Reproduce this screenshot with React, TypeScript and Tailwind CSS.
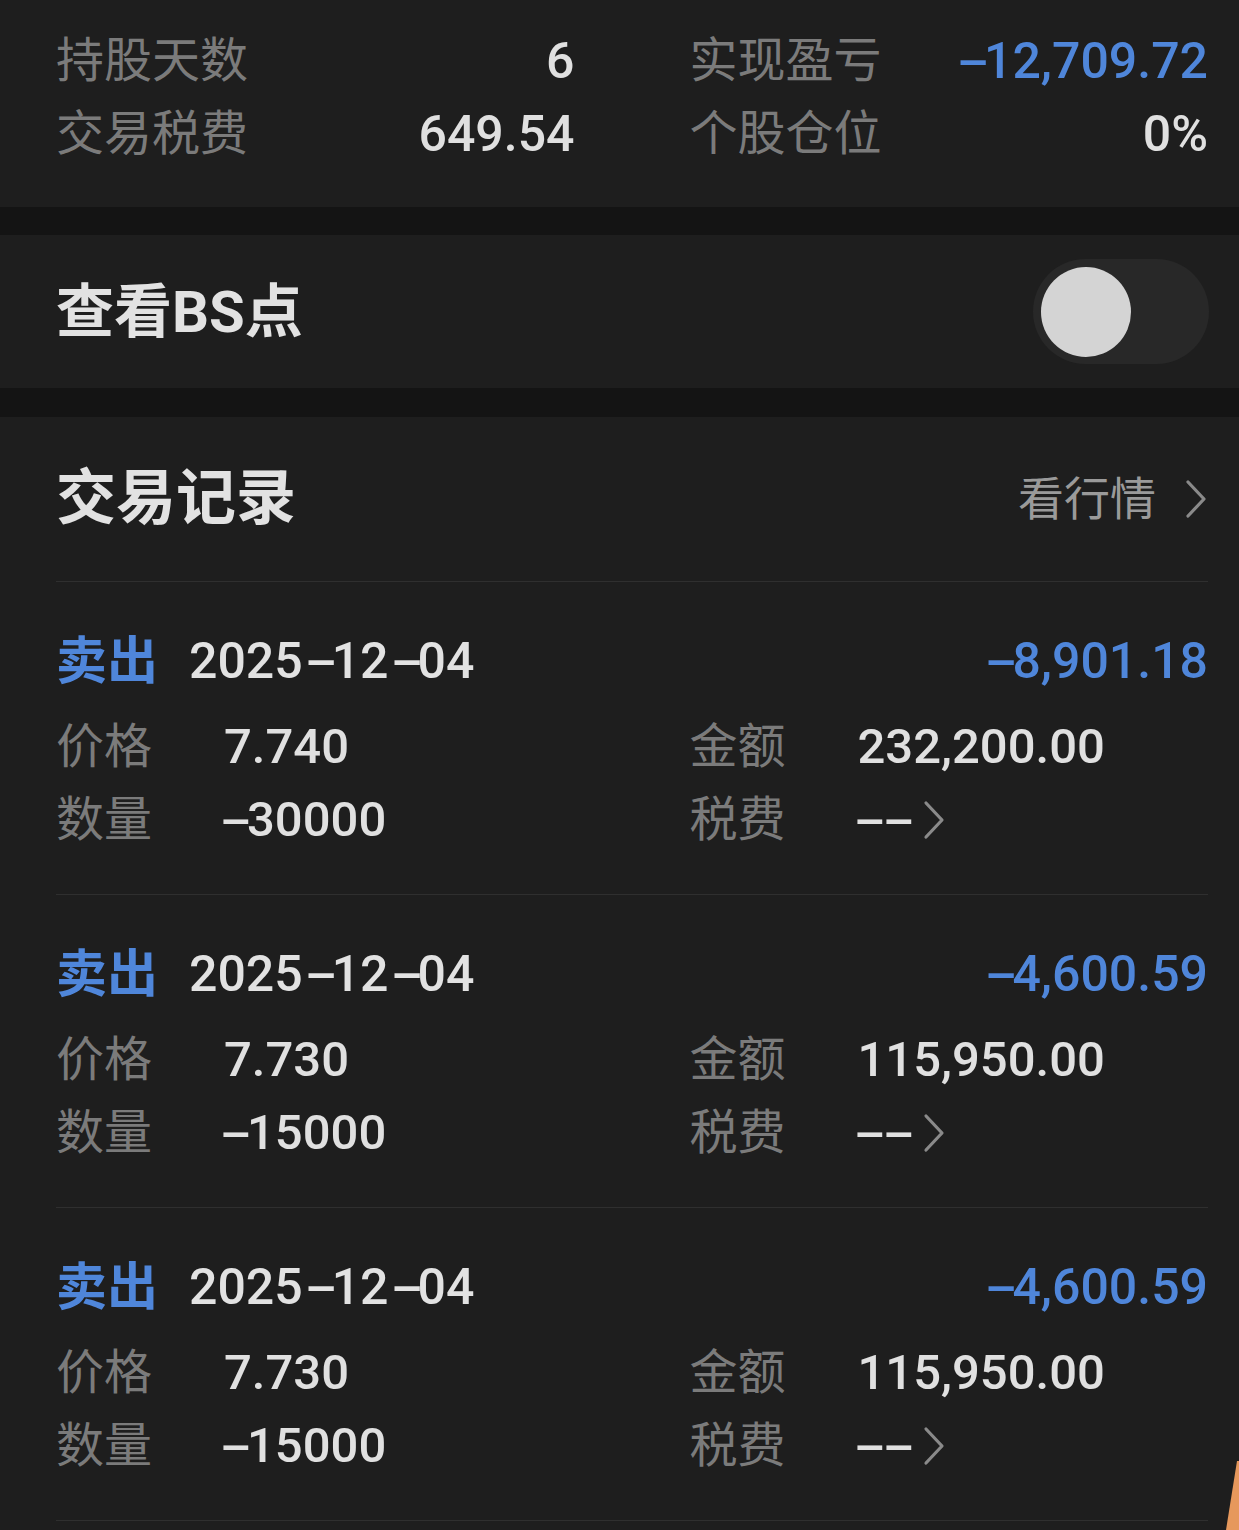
import React from "react";

const Chevron = ({ className }: { className?: string }) => (
  <svg viewBox="0 0 24 40" className={className} fill="none">
    <path d="M4 3 L20 20 L4 37" stroke="#8a8a8a" strokeWidth="3.2" strokeLinecap="round" strokeLinejoin="round" />
  </svg>
);

const Num = ({ text }: { text: string }) => {
  const parts: React.ReactNode[] = [];
  let buf = "";
  text.split("").forEach((ch, i) => {
    if (ch === "-") {
      if (buf) parts.push(buf);
      buf = "";
      parts.push(
        <span key={i} className="mx-[8px] inline-block w-[13px] scale-x-[1.95] text-center">
          -
        </span>
      );
    } else {
      buf += ch;
    }
  });
  if (buf) parts.push(buf);
  return <>{parts}</>;
};

const Stat = ({ label, value, blue }: { label: string; value: string; blue?: boolean }) => (
  <div className="flex h-[73px] items-center justify-between">
    <span className="text-[48px] leading-none text-[#7b7b7b]">{label}</span>
    <span className={`text-[50px] font-medium leading-none ${blue ? "text-[#4f86da]" : "text-[#e0e0e0]"}`}>
      <Num text={value} />
    </span>
  </div>
);

type Rec = { date: string; pl: string; price: string; qty: string; amount: string };

const records: Rec[] = [
  { date: "2025-12-04", pl: "-8,901.18", price: "7.740", qty: "-30000", amount: "232,200.00" },
  { date: "2025-12-04", pl: "-4,600.59", price: "7.730", qty: "-15000", amount: "115,950.00" },
  { date: "2025-12-04", pl: "-4,600.59", price: "7.730", qty: "-15000", amount: "115,950.00" },
];

const Field = ({ label, children }: { label: string; children: React.ReactNode }) => (
  <div className="flex h-[73px] items-center">
    <span className="w-[168px] shrink-0 text-[48px] leading-none text-[#7b7b7b]">{label}</span>
    <span className="flex items-center text-[49px] font-medium leading-none text-[#e0e0e0]">{children}</span>
  </div>
);

const Record = ({ r }: { r: Rec }) => (
  <div className="h-[313px] border-b border-[#2f2f2f] pt-[49px]">
    <div className="flex h-[60px] items-center justify-between">
      <div className="flex items-center">
        <span className="text-[51px] font-bold leading-none text-[#4f86da]">卖出</span>
        <span className="ml-[31px] text-[50px] font-medium leading-none text-[#e2e2e2]">
          <Num text={r.date} />
        </span>
      </div>
      <span className="text-[50px] font-medium leading-none text-[#4f86da]">
        <Num text={r.pl} />
      </span>
    </div>
    <div className="mt-[19px] grid grid-cols-2 gap-x-[115px]">
      <div>
        <Field label="价格">{r.price}</Field>
        <Field label="数量">
          <span className="-ml-[6px]">
            <Num text={r.qty} />
          </span>
        </Field>
      </div>
      <div>
        <Field label="金额">{r.amount}</Field>
        <Field label="税费">
          <span className="-ml-[6px]">
            <Num text="--" />
          </span>
          <Chevron className="ml-[12px] h-[40px] w-[24px]" />
        </Field>
      </div>
    </div>
  </div>
);

export default function App() {
  return (
    <div className="relative h-[1530px] w-[1239px] overflow-hidden bg-[#1e1e1e] font-[Roboto,'Noto_Sans_CJK_SC',sans-serif]">
      {/* summary */}
      <div className="h-[207px] pl-[56px] pr-[31px] pt-[24px]">
        <div className="grid grid-cols-2 gap-x-[115px]">
          <div>
            <Stat label="持股天数" value="6" />
            <Stat label="交易税费" value="649.54" />
          </div>
          <div>
            <Stat label="实现盈亏" value="-12,709.72" blue />
            <Stat label="个股仓位" value="0%" />
          </div>
        </div>
      </div>
      <div className="h-[28px] bg-[#141414]" />
      {/* BS toggle */}
      <div className="flex h-[153px] items-center justify-between pl-[56px] pr-[30px]">
        <span className="text-[58px] font-bold leading-none text-[#e2e2e2]">查看BS点</span>
        <div className="flex h-[105px] w-[176px] items-center rounded-full bg-[#282828] pl-[8px]">
          <div className="h-[90px] w-[90px] rounded-full bg-[#d4d4d4]" />
        </div>
      </div>
      <div className="h-[29px] bg-[#141414]" />
      {/* records */}
      <div className="pl-[56px] pr-[31px]">
        <div className="flex h-[165px] items-center justify-between border-b border-[#2f2f2f]">
          <span className="text-[60px] font-bold leading-none text-[#e2e2e2]">交易记录</span>
          <div className="flex items-center">
            <span className="text-[46px] leading-none text-[#9a9a9a]">看行情</span>
            <Chevron className="ml-[28px] h-[40px] w-[24px]" />
          </div>
        </div>
        {records.map((r, i) => (
          <Record key={i} r={r} />
        ))}
      </div>
      <svg className="absolute left-[1226px] top-[1461px] h-[69px] w-[13px]" viewBox="0 0 13 69">
        <polygon points="11,0 13,0 13,69 0,69" fill="#e6985c" />
      </svg>
    </div>
  );
}
